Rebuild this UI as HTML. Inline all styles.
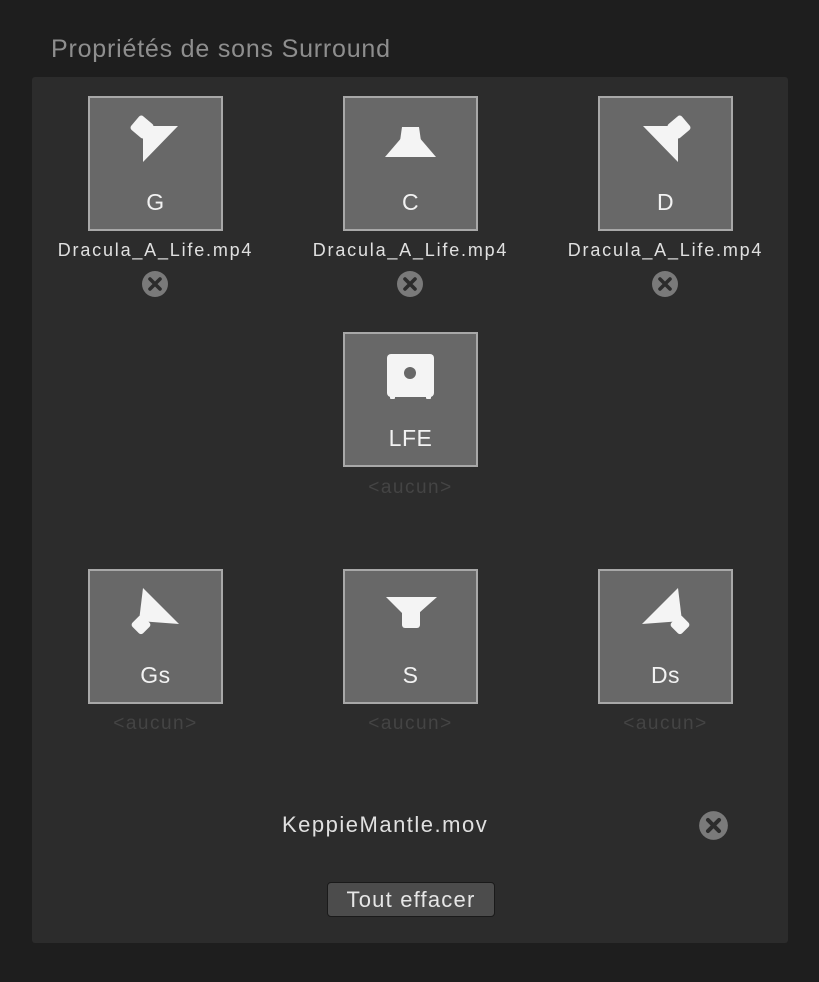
<!DOCTYPE html>
<html><head><meta charset="utf-8"><style>
body{margin:0;width:819px;height:982px;background:#1e1e1e;font-family:"Liberation Sans",sans-serif;position:relative;overflow:hidden}
.t{position:absolute;left:51px;top:35px;font-size:25px;letter-spacing:0.8px;color:#8e8e8e}
.p{position:absolute;left:32px;top:77px;width:756px;height:866px;background:#2c2c2c;border-radius:3px}
.b{position:absolute;width:131px;height:131px;border:2px solid #a8a8a8;background:#686868}
.b svg{position:absolute;left:-2px;top:-2px}
.b .l{position:absolute;left:0;right:0;top:91px;text-align:center;color:#f2f2f2;font-size:23px;letter-spacing:0.5px}
.f{position:absolute;width:255px;text-align:center;color:#e0e0e0;font-size:18px;letter-spacing:1.8px;white-space:nowrap}
.a{position:absolute;width:255px;text-align:center;color:#444;font-size:19px;letter-spacing:1.5px}
.x{position:absolute;width:28px;height:28px}
.btn{position:absolute;left:327px;top:882px;width:168px;height:35px;box-sizing:border-box;border:1px solid #1a1a1a;border-radius:4px;background:#4c4c4c;color:#e6e6e6;font-size:22px;letter-spacing:1.2px;text-align:center;line-height:33px}
</style></head><body>
<div class="t">Propriétés de sons Surround</div>
<div class="p"></div>

<div class="b" style="left:88px;top:96px"><svg width="135" height="135"><rect x="45" y="22" width="18" height="18" rx="3" transform="rotate(40 54 31)" fill="#f4f4f4"/><polygon points="55,30 90,30 55,66" fill="#f4f4f4"/></svg><div class="l">G</div></div>
<div class="b" style="left:343px;top:96px"><svg width="135" height="135"><polygon points="59,31 76,31 78,45 57,45" fill="#f4f4f4"/><polygon points="60,40 75,40 93,61 42,61" fill="#f4f4f4"/></svg><div class="l">C</div></div>
<div class="b" style="left:598px;top:96px"><svg width="135" height="135"><g transform="translate(135 0) scale(-1 1)"><rect x="45" y="22" width="18" height="18" rx="3" transform="rotate(40 54 31)" fill="#f4f4f4"/><polygon points="55,30 90,30 55,66" fill="#f4f4f4"/></g></svg><div class="l">D</div></div>

<div class="b" style="left:343px;top:332px"><svg width="135" height="135"><rect x="44" y="22" width="47" height="43" rx="4" fill="#f4f4f4"/><rect x="47" y="62" width="5" height="5" rx="1" fill="#f4f4f4"/><rect x="83" y="62" width="5" height="5" rx="1" fill="#f4f4f4"/><circle cx="67" cy="41" r="6" fill="#686868"/></svg><div class="l">LFE</div></div>

<div class="b" style="left:88px;top:569px"><svg width="135" height="135"><g transform="translate(135 0) scale(-1 1)"><polygon points="80,19 44,55 84,52" fill="#f4f4f4"/><rect x="75" y="48" width="15" height="15" rx="3" transform="rotate(45 82 55)" fill="#f4f4f4"/></g></svg><div class="l">Gs</div></div>
<div class="b" style="left:343px;top:569px"><svg width="135" height="135"><polygon points="43,28 94,28 76,44 59,44" fill="#f4f4f4"/><rect x="59" y="40" width="18" height="19" rx="3" fill="#f4f4f4"/></svg><div class="l">S</div></div>
<div class="b" style="left:598px;top:569px"><svg width="135" height="135"><polygon points="80,19 44,55 84,52" fill="#f4f4f4"/><rect x="75" y="48" width="15" height="15" rx="3" transform="rotate(45 82 55)" fill="#f4f4f4"/></svg><div class="l">Ds</div></div>

<div class="f" style="left:28px;top:240px">Dracula_A_Life.mp4</div>
<div class="f" style="left:283px;top:240px">Dracula_A_Life.mp4</div>
<div class="f" style="left:538px;top:240px">Dracula_A_Life.mp4</div>

<svg class="x" style="left:141px;top:270px" viewBox="0 0 28 28"><circle cx="14" cy="14" r="13" fill="#7a7a7a"/><path d="M9 9L19 19M19 9L9 19" stroke="#2c2c2c" stroke-width="3.6" stroke-linecap="round"/></svg>
<svg class="x" style="left:396px;top:270px" viewBox="0 0 28 28"><circle cx="14" cy="14" r="13" fill="#7a7a7a"/><path d="M9 9L19 19M19 9L9 19" stroke="#2c2c2c" stroke-width="3.6" stroke-linecap="round"/></svg>
<svg class="x" style="left:651px;top:270px" viewBox="0 0 28 28"><circle cx="14" cy="14" r="13" fill="#7a7a7a"/><path d="M9 9L19 19M19 9L9 19" stroke="#2c2c2c" stroke-width="3.6" stroke-linecap="round"/></svg>

<div class="a" style="left:283px;top:477px">&lt;aucun&gt;</div>
<div class="a" style="left:28px;top:713px">&lt;aucun&gt;</div>
<div class="a" style="left:283px;top:713px">&lt;aucun&gt;</div>
<div class="a" style="left:538px;top:713px">&lt;aucun&gt;</div>

<div style="position:absolute;left:282px;top:812px;font-size:22px;letter-spacing:1.5px;color:#e0e0e0">KeppieMantle.mov</div>
<svg class="x" style="left:698px;top:810px;width:31px;height:31px" viewBox="0 0 28 28"><circle cx="14" cy="14" r="13" fill="#7a7a7a"/><path d="M9 9L19 19M19 9L9 19" stroke="#2c2c2c" stroke-width="3.6" stroke-linecap="round"/></svg>
<div class="btn">Tout effacer</div>
</body></html>
